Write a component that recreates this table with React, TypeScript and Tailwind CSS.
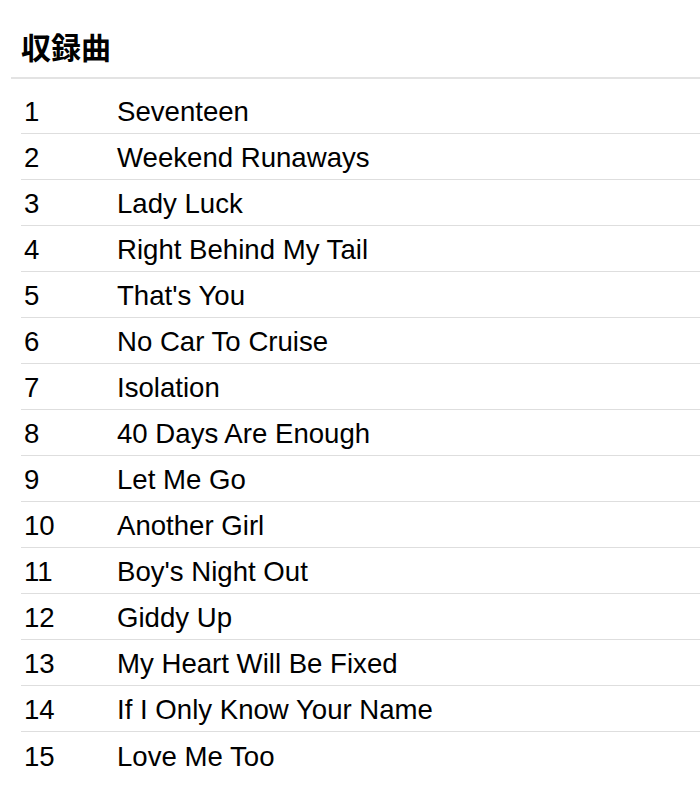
import React from "react";

const tracks = [
  "Seventeen",
  "Weekend Runaways",
  "Lady Luck",
  "Right Behind My Tail",
  "That's You",
  "No Car To Cruise",
  "Isolation",
  "40 Days Are Enough",
  "Let Me Go",
  "Another Girl",
  "Boy's Night Out",
  "Giddy Up",
  "My Heart Will Be Fixed",
  "If I Only Know Your Name",
  "Love Me Too",
];

export default function App() {
  return (
    <div
      className="w-[700px] h-[801px] bg-white overflow-hidden text-black"
      style={{ fontFamily: '"Liberation Sans", Arial, "Noto Sans CJK JP", sans-serif' }}
    >
      <div className="ml-[11px]">
        <div className="pt-[28px] pb-[13px] pl-[10px] border-b-2 border-[#e3e3e3]">
          <h2
            className="text-[30px] leading-[36px] font-bold"
            style={{ fontFamily: '"Noto Sans CJK JP", sans-serif' }}
          >
            収録曲
          </h2>
        </div>
        <div className="ml-[10px] mt-[9px]">
          {tracks.map((t, i) => (
            <div
              key={i}
              className={`flex items-center h-[46px] pt-[3px] text-[27.6px] ${
                i < tracks.length - 1 ? "border-b border-[#dedede]" : ""
              }`}
            >
              <div className="w-[96px] pl-[3px] shrink-0">{i + 1}</div>
              <div className="whitespace-nowrap">{t}</div>
            </div>
          ))}
        </div>
      </div>
    </div>
  );
}
